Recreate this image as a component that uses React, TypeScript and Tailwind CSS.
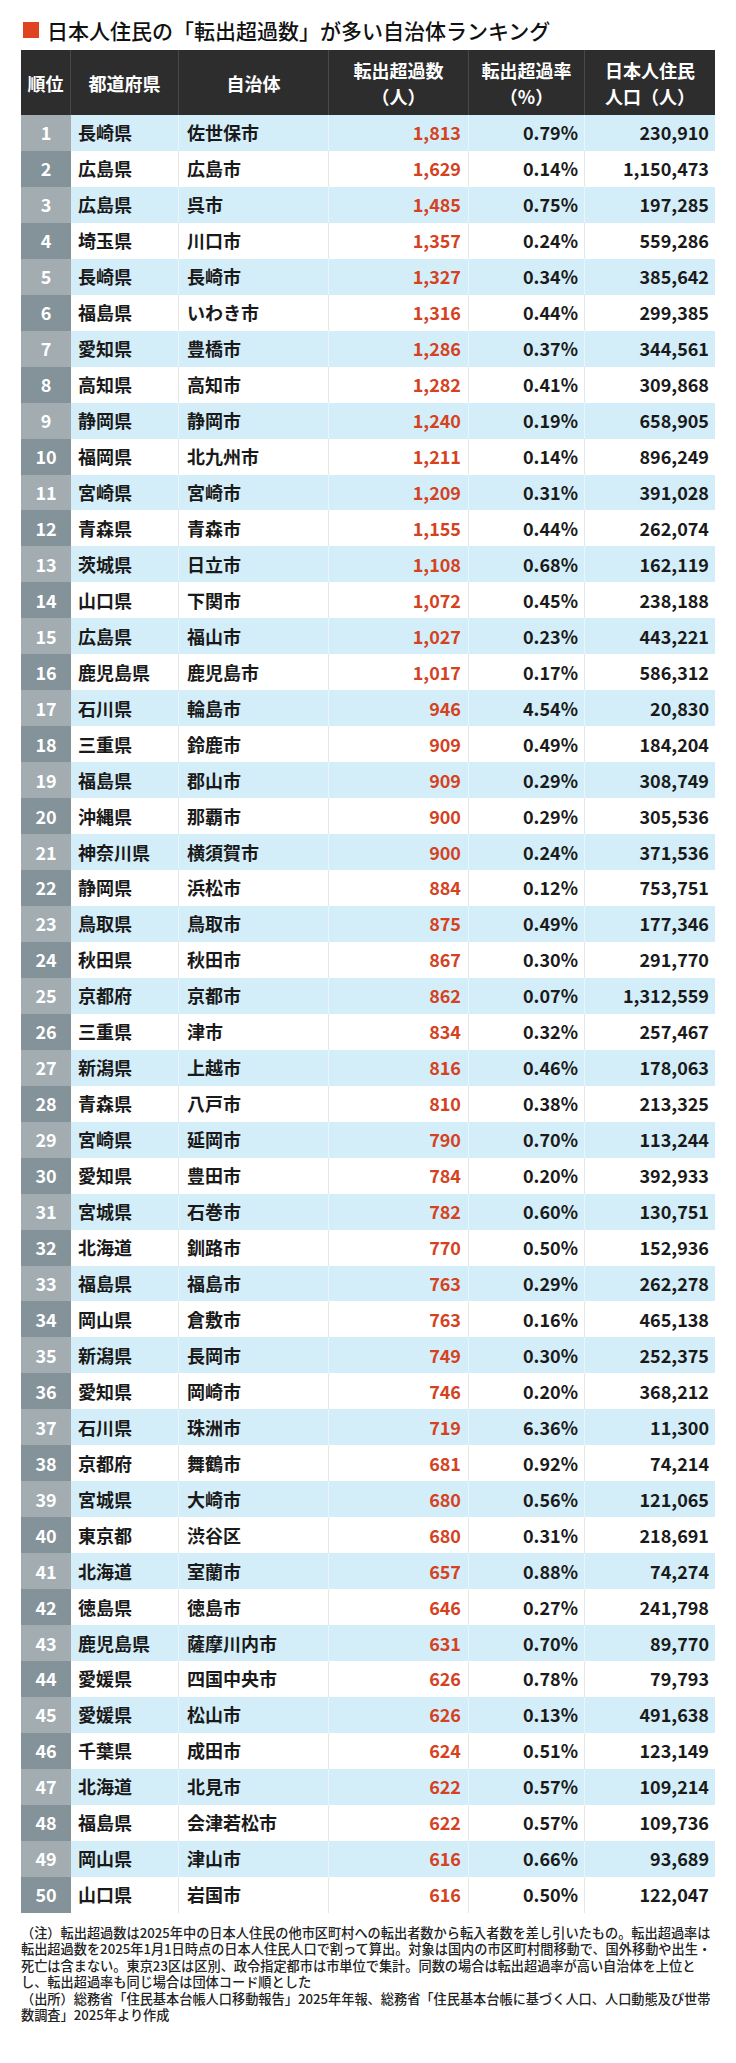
import React from "react";

type Row = [number, string, string, string, string, string];

const rows: Row[] = [
  [1, "長崎県", "佐世保市", "1,813", "0.79%", "230,910"],
  [2, "広島県", "広島市", "1,629", "0.14%", "1,150,473"],
  [3, "広島県", "呉市", "1,485", "0.75%", "197,285"],
  [4, "埼玉県", "川口市", "1,357", "0.24%", "559,286"],
  [5, "長崎県", "長崎市", "1,327", "0.34%", "385,642"],
  [6, "福島県", "いわき市", "1,316", "0.44%", "299,385"],
  [7, "愛知県", "豊橋市", "1,286", "0.37%", "344,561"],
  [8, "高知県", "高知市", "1,282", "0.41%", "309,868"],
  [9, "静岡県", "静岡市", "1,240", "0.19%", "658,905"],
  [10, "福岡県", "北九州市", "1,211", "0.14%", "896,249"],
  [11, "宮崎県", "宮崎市", "1,209", "0.31%", "391,028"],
  [12, "青森県", "青森市", "1,155", "0.44%", "262,074"],
  [13, "茨城県", "日立市", "1,108", "0.68%", "162,119"],
  [14, "山口県", "下関市", "1,072", "0.45%", "238,188"],
  [15, "広島県", "福山市", "1,027", "0.23%", "443,221"],
  [16, "鹿児島県", "鹿児島市", "1,017", "0.17%", "586,312"],
  [17, "石川県", "輪島市", "946", "4.54%", "20,830"],
  [18, "三重県", "鈴鹿市", "909", "0.49%", "184,204"],
  [19, "福島県", "郡山市", "909", "0.29%", "308,749"],
  [20, "沖縄県", "那覇市", "900", "0.29%", "305,536"],
  [21, "神奈川県", "横須賀市", "900", "0.24%", "371,536"],
  [22, "静岡県", "浜松市", "884", "0.12%", "753,751"],
  [23, "鳥取県", "鳥取市", "875", "0.49%", "177,346"],
  [24, "秋田県", "秋田市", "867", "0.30%", "291,770"],
  [25, "京都府", "京都市", "862", "0.07%", "1,312,559"],
  [26, "三重県", "津市", "834", "0.32%", "257,467"],
  [27, "新潟県", "上越市", "816", "0.46%", "178,063"],
  [28, "青森県", "八戸市", "810", "0.38%", "213,325"],
  [29, "宮崎県", "延岡市", "790", "0.70%", "113,244"],
  [30, "愛知県", "豊田市", "784", "0.20%", "392,933"],
  [31, "宮城県", "石巻市", "782", "0.60%", "130,751"],
  [32, "北海道", "釧路市", "770", "0.50%", "152,936"],
  [33, "福島県", "福島市", "763", "0.29%", "262,278"],
  [34, "岡山県", "倉敷市", "763", "0.16%", "465,138"],
  [35, "新潟県", "長岡市", "749", "0.30%", "252,375"],
  [36, "愛知県", "岡崎市", "746", "0.20%", "368,212"],
  [37, "石川県", "珠洲市", "719", "6.36%", "11,300"],
  [38, "京都府", "舞鶴市", "681", "0.92%", "74,214"],
  [39, "宮城県", "大崎市", "680", "0.56%", "121,065"],
  [40, "東京都", "渋谷区", "680", "0.31%", "218,691"],
  [41, "北海道", "室蘭市", "657", "0.88%", "74,274"],
  [42, "徳島県", "徳島市", "646", "0.27%", "241,798"],
  [43, "鹿児島県", "薩摩川内市", "631", "0.70%", "89,770"],
  [44, "愛媛県", "四国中央市", "626", "0.78%", "79,793"],
  [45, "愛媛県", "松山市", "626", "0.13%", "491,638"],
  [46, "千葉県", "成田市", "624", "0.51%", "123,149"],
  [47, "北海道", "北見市", "622", "0.57%", "109,214"],
  [48, "福島県", "会津若松市", "622", "0.57%", "109,736"],
  [49, "岡山県", "津山市", "616", "0.66%", "93,689"],
  [50, "山口県", "岩国市", "616", "0.50%", "122,047"],
];

const font = { fontFamily: '"Noto Sans CJK JP", "Noto Sans", sans-serif' };

const cols = "grid grid-cols-[50px_108px_150px_140px_116px_130px]";

function HeaderCell({ children, last }: { children: React.ReactNode; last?: boolean }) {
  return (
    <div
      className={`flex items-center justify-center text-center leading-[26px] ${
        last ? "" : "border-r border-[#484848]"
      }`}
    >
      {children}
    </div>
  );
}

function TableRow({ row }: { row: Row }) {
  const [rank, pref, city, count, rate, pop] = row;
  const odd = rank % 2 === 1;
  const bg = odd ? "bg-[#d4eef9]" : "bg-white";
  const line = odd ? "border-[#e9f5fb]" : "border-[#e6e6e6]";
  return (
    <div className={`${cols} h-[35.96px] text-[18px] font-bold text-[#1a1a1a] ${bg}`}>
      <div
        className={`flex items-center justify-center text-white ${
          odd ? "bg-[#a2acb1]" : "bg-[#84929a]"
        }`}
      >
        {rank}
      </div>
      <div className={`flex items-center pl-[7px] border-r ${line}`}>{pref}</div>
      <div className={`flex items-center pl-[8px] border-r ${line}`}>{city}</div>
      <div className={`flex items-center justify-end pr-[7px] text-[#d4421f] border-r ${line}`}>
        {count}
      </div>
      <div className={`flex items-center justify-end pr-[6px] border-r ${line}`}>{rate}</div>
      <div className="flex items-center justify-end pr-[6px]">{pop}</div>
    </div>
  );
}

export default function App() {
  return (
    <div className="w-[736px] h-[2063px] bg-white pl-[21px] pt-[18px]" style={font}>
      <h1 className="flex items-center h-[24px] text-[21px] font-medium text-[#111] leading-none">
        <span className="ml-[2px] mr-[8px] w-[16px] h-[16px] bg-[#e0431f] inline-block" />
        日本人住民の「転出超過数」が多い自治体ランキング
      </h1>
      <div className="mt-[8px] w-[694px]">
        <div className={`${cols} h-[65px] bg-[#2d2d2d] text-white text-[18px] font-bold`}>
          <HeaderCell>順位</HeaderCell>
          <HeaderCell>都道府県</HeaderCell>
          <HeaderCell>自治体</HeaderCell>
          <HeaderCell>
            転出超過数
            <br />
            （人）
          </HeaderCell>
          <HeaderCell>
            転出超過率
            <br />
            （%）
          </HeaderCell>
          <HeaderCell last>
            日本人住民
            <br />
            人口（人）
          </HeaderCell>
        </div>
        {rows.map((r) => (
          <TableRow key={r[0]} row={r} />
        ))}
      </div>
      <div className="mt-[12px] w-[694px] text-[13.2px] leading-[16.5px] font-medium text-[#222]">
        <p className="whitespace-nowrap">
          （注）転出超過数は2025年中の日本人住民の他市区町村への転出者数から転入者数を差し引いたもの。転出超過率は
        </p>
        <p className="whitespace-nowrap">
          転出超過数を2025年1月1日時点の日本人住民人口で割って算出。対象は国内の市区町村間移動で、国外移動や出生・
        </p>
        <p className="whitespace-nowrap">
          死亡は含まない。東京23区は区別、政令指定都市は市単位で集計。同数の場合は転出超過率が高い自治体を上位と
        </p>
        <p className="whitespace-nowrap">し、転出超過率も同じ場合は団体コード順とした</p>
        <p className="whitespace-nowrap">
          （出所）総務省「住民基本台帳人口移動報告」2025年年報、総務省「住民基本台帳に基づく人口、人口動態及び世帯
        </p>
        <p className="whitespace-nowrap">数調査」2025年より作成</p>
      </div>
    </div>
  );
}
